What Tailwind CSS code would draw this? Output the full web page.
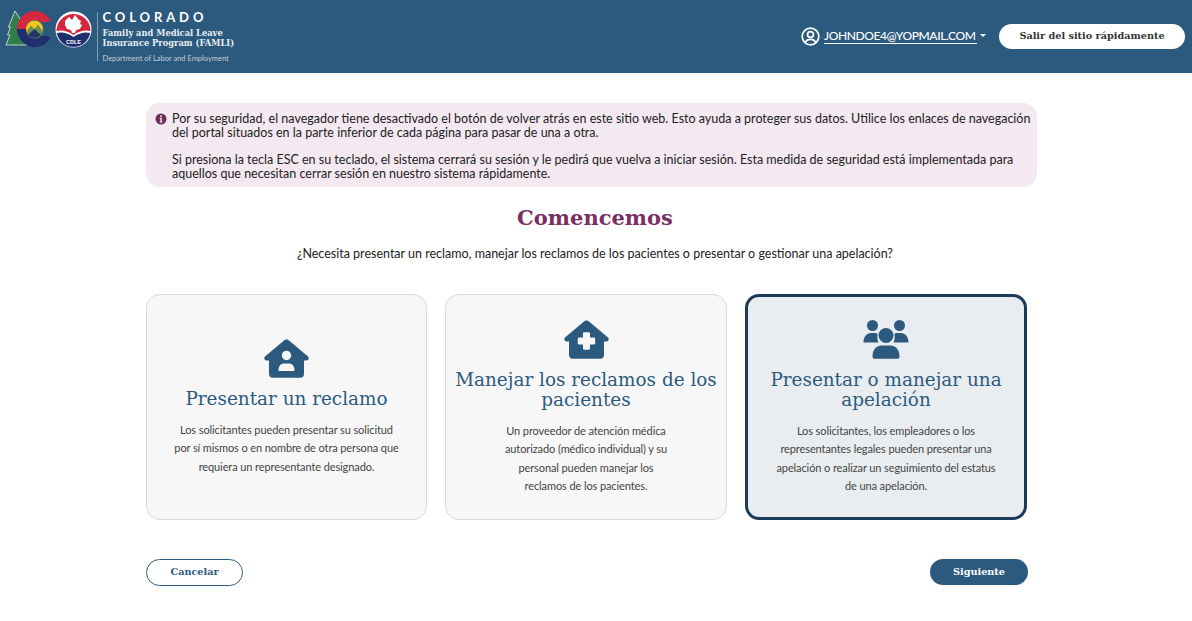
<!doctype html>
<html lang="es">
<head>
<meta charset="utf-8">
<title>FAMLI</title>
<script src="https://cdn.jsdelivr.net/npm/@tailwindcss/browser@4"></script>
</head>
<body class="bg-white font-['Lato','Noto_Sans',sans-serif] text-[#222]">
<header class="h-[73px] bg-[#2c5a7e] flex items-center justify-between pr-[7px]">
  <div class="flex items-start h-[73px]">
    <svg class="block shrink-0" width="96" height="73" viewBox="0 0 96 73">
      <path d="M15 11 L24 25 L21 25 L26 33 L23 33 L27 45 L6 45 L10 35 L7.500 35 L10.500 27 L8.500 27Z" fill="#2f7d4a" stroke="#fff" stroke-width=".7"/>
      <path d="M46.800 22.500 A13.500 13.500 0 0 0 21.500 29 L48.500 29" fill="none" stroke="#d3283f" stroke-width="9"/>
      <path d="M21.500 29 A13.500 13.500 0 0 0 46.800 35.500" fill="none" stroke="#1f2e6e" stroke-width="9"/>
      <path d="M42 29H50V36L42 36Z" fill="#2c5a7e"/>
      <path d="M42 22H52V29H42Z" fill="#2c5a7e"/>
      <circle cx="34.500" cy="29" r="8.500" fill="#f6c81e"/>
      <path d="M26.500 32 L31 25.500 L34.500 29 L38 24.500 L43 32 A8.500 8.500 0 0 1 26.500 32Z" fill="#6d8f4e"/>
      <path d="M28 35 L34.500 29 L41 35 A8.500 8.500 0 0 1 28 35Z" fill="#22336f"/>
      <circle cx="73.500" cy="29.500" r="18" fill="#fff"/>
      <path d="M56.500 31 A17 17 0 1 1 90.500 31 Q82 29 73.500 35 Q65 29 56.500 31Z" fill="#d3283f"/>
      <path d="M56.800 33 Q65 31 73.500 37 Q82 31 90.200 33 A17 17 0 0 1 56.800 33Z" fill="#1f2e6e"/>
      <path d="M65 21 L69 17 L72 20 L75 15 L78 19 L81 21 L80 24 L82 25 L80 29 L76 30 L75 33 H72 L71 30 L67 29 L65 25Z" fill="#fff"/>
      <text x="73.500" y="44" text-anchor="middle" font-size="5.500" font-weight="700" fill="#fff" font-family="Liberation Sans">CDLE</text>
    </svg>
    <div class="ml-[0.5px] mt-[12px] h-[49px] border-l border-[#a9bccb]/70 pl-[5px]">
      <div class="font-['Lato',sans-serif] font-bold text-white text-[13px] leading-[10px] tracking-[3.9px]">COLORADO</div>
      <div class="mt-[6px] font-['DejaVu_Serif',serif] font-bold text-[#e7edf2] text-[8.300px] leading-[10px] whitespace-nowrap">Family and Medical Leave<br>Insurance Program (FAMLI)</div>
      <div class="mt-[6px] font-['Lato',sans-serif] text-[#c3cfd9] text-[7.500px] leading-[9px] whitespace-nowrap">Department of Labor and Employment</div>
    </div>
  </div>
  <div class="flex items-center">
    <svg width="19" height="19" viewBox="0 0 24 24" fill="none" stroke="#fff" stroke-width="2.200">
      <circle cx="12" cy="12" r="10.500"/>
      <circle cx="12" cy="9.500" r="3.700"/>
      <path d="M5.500 19.500 C6.500 16 9 15.500 12 15.500 C15 15.500 17.500 16 18.500 19.500"/>
    </svg>
    <a class="ml-[4px] border-b border-white text-white text-[12px] leading-[14px] tracking-[-0.4px] w-[153px] whitespace-nowrap font-['Lato',sans-serif] font-medium">JOHNDOE4@YOPMAIL.COM</a>
    <span class="ml-[3px] mb-[3px] w-0 h-0 border-x-[3.500px] border-x-transparent border-t-[3.500px] border-t-white"></span>
    <button class="ml-[13px] w-[186px] h-[25px] rounded-full bg-white text-[#333] font-['DejaVu_Serif',serif] font-bold text-[9.700px]">Salir del sitio rápidamente</button>
  </div>
</header>
<main class="w-[891px] ml-[146px]">
  <div class="mt-[30px] h-[84px] w-[891px] rounded-[14px] bg-[#f4e9f0] pl-[9px] pr-[8px] pt-[8px] flex gap-[5px] text-[12.500px] leading-[14px] text-[#222]">
    <svg class="mt-[2px] shrink-0" width="12" height="12" viewBox="0 0 12 12"><circle cx="6" cy="6" r="5.500" fill="#6e2c5e"/><circle cx="6" cy="3.300" r="1" fill="#f4e9f0"/><path d="M4.700 5H6.800V8.500H7.500V9.400H4.600V8.500H5.400V5.900H4.700Z" fill="#f4e9f0"/></svg>
    <div class="whitespace-nowrap pt-[1px]">
      <p>Por su seguridad, el navegador tiene desactivado el botón de volver atrás en este sitio web. Esto ayuda a proteger sus datos. Utilice los enlaces de navegación<br>del portal situados en la parte inferior de cada página para pasar de una a otra.</p>
      <p class="mt-[13px]">Si presiona la tecla ESC en su teclado, el sistema cerrará su sesión y le pedirá que vuelva a iniciar sesión. Esta medida de seguridad está implementada para<br>aquellos que necesitan cerrar sesión en nuestro sistema rápidamente.</p>
    </div>
  </div>
  <h1 class="mt-[17px] w-[898px] text-center font-['DejaVu_Serif',serif] font-bold text-[21px] leading-[28px] text-[#7a2f63]">Comencemos</h1>
  <p class="mt-[14px] w-[898px] text-center text-[12.500px] leading-[16px] text-[#222]">¿Necesita presentar un reclamo, manejar los reclamos de los pacientes o presentar o gestionar una apelación?</p>
  <section class="mt-[32px] grid grid-cols-[281px_282px_282px] gap-x-[18px] w-[882px]">
    <article class="h-[226px] rounded-[14px] border border-[#d9d9d9] bg-[#f7f7f7] flex flex-col items-center justify-center text-center pt-[1px]">
      <svg width="45" height="39" viewBox="0 0 45 39"><path d="M22.500 0.500 C23.500 0.500 24.500 1 25 1.500 L44 17.500 C45.500 19 44.500 21.500 42.500 21.500 H40 V35 C40 37.200 38.500 38.800 36.500 38.800 H8.500 C6.500 38.800 5 37.200 5 35 V21.500 H2.500 C0.500 21.500 -0.500 19 1 17.500 L20 1.500 C20.500 1 21.500 .5 22.500 .5Z" fill="#2c5a7e"/><circle cx="22.500" cy="16.500" r="4.700" fill="#f7f7f7"/><path d="M14.500 31 C14.500 26.500 17.500 24.500 20 24.500 H25 C27.500 24.500 30.500 26.500 30.500 31 C30.500 31.500 30 32 29.500 32 H15.500 C15 32 14.500 31.500 14.500 31Z" fill="#f7f7f7"/></svg>
      <h2 class="mt-[11px] font-['DejaVu_Serif',serif] text-[#2c5a7e] text-[18.400px] leading-[20px]">Presentar un reclamo</h2>
      <p class="mt-[12px] text-[11px] leading-[18.300px] tracking-[-0.1px] text-[#444]">Los solicitantes pueden presentar su solicitud<br>por sí mismos o en nombre de otra persona que<br>requiera un representante designado.</p>
    </article>
    <article class="h-[226px] rounded-[14px] border border-[#d9d9d9] bg-[#f7f7f7] flex flex-col items-center justify-center text-center pt-[1px]">
      <svg width="45" height="39" viewBox="0 0 45 39"><path d="M22.500 0.500 C23.500 0.500 24.500 1 25 1.500 L44 17.500 C45.500 19 44.500 21.500 42.500 21.500 H40 V35 C40 37.200 38.500 38.800 36.500 38.800 H8.500 C6.500 38.800 5 37.200 5 35 V21.500 H2.500 C0.500 21.500 -0.500 19 1 17.500 L20 1.500 C20.500 1 21.500 .5 22.500 .5Z" fill="#2c5a7e"/><path d="M19 13.500 C19 12.800 19.500 12.300 20.200 12.300 H24.800 C25.500 12.300 26 12.800 26 13.500 V17.500 H30 C30.700 17.500 31.200 18 31.200 18.700 V23.300 C31.200 24 30.700 24.500 30 24.500 H26 V28.500 C26 29.200 25.500 29.700 24.800 29.700 H20.200 C19.500 29.700 19 29.200 19 28.500 V24.500 H15 C14.300 24.500 13.800 24 13.800 23.300 V18.700 C13.800 18 14.300 17.500 15 17.500 H19Z" fill="#f7f7f7"/></svg>
      <h2 class="mt-[11px] font-['DejaVu_Serif',serif] text-[#2c5a7e] text-[18.400px] leading-[20px]">Manejar los reclamos de los<br>pacientes</h2>
      <p class="mt-[12px] text-[11px] leading-[18.300px] tracking-[-0.1px] text-[#444]">Un proveedor de atención médica<br>autorizado (médico individual) y su<br>personal pueden manejar los<br>reclamos de los pacientes.</p>
    </article>
    <article class="h-[226px] rounded-[14px] border-[3px] border-[#1c3b5a] bg-[#e9edf0] flex flex-col items-center justify-center text-center pt-[1px]">
      <svg width="46" height="39" viewBox="0 0 46 39"><circle cx="9.500" cy="5.500" r="5.500" fill="#2c5a7e"/><circle cx="36.500" cy="5.500" r="5.500" fill="#2c5a7e"/><path d="M0.500 22.500 C0.500 16.500 4 13 8 13 H12.500 C14 13 14.800 13.800 14.500 15 C14 17.500 14.500 20 15.500 22.500Z" fill="#2c5a7e"/><path d="M45.500 22.500 C45.500 16.500 42 13 38 13 H33.500 C32 13 31.200 13.800 31.500 15 C32 17.500 31.500 20 30.500 22.500Z" fill="#2c5a7e"/><circle cx="23" cy="15.500" r="7.500" fill="#2c5a7e"/><path d="M9.500 36.500 C9.500 29 14 25.500 18.500 25.500 H27.500 C32 25.500 36.500 29 36.500 36.500 C36.500 38 35.500 38.800 34.500 38.800 H11.500 C10.500 38.800 9.500 38 9.500 36.500Z" fill="#2c5a7e"/></svg>
      <h2 class="mt-[11px] font-['DejaVu_Serif',serif] text-[#2c5a7e] text-[18.400px] leading-[20px]">Presentar o manejar una<br>apelación</h2>
      <p class="mt-[12px] text-[11px] leading-[18.300px] tracking-[-0.1px] text-[#444]">Los solicitantes, los empleadores o los<br>representantes legales pueden presentar una<br>apelación o realizar un seguimiento del estatus<br>de una apelación.</p>
    </article>
  </section>
  <div class="mt-[39px] w-[882px] flex justify-between items-start">
    <button class="w-[97px] h-[27px] rounded-full border border-[#2c5a7e] bg-white text-[#2c5a7e] font-['DejaVu_Serif',serif] font-bold text-[9.700px]">Cancelar</button>
    <button class="w-[98px] h-[26px] rounded-full bg-[#2c5a7e] text-white font-['DejaVu_Serif',serif] font-bold text-[9.700px]">Siguiente</button>
  </div>
</main>
</body>
</html>
